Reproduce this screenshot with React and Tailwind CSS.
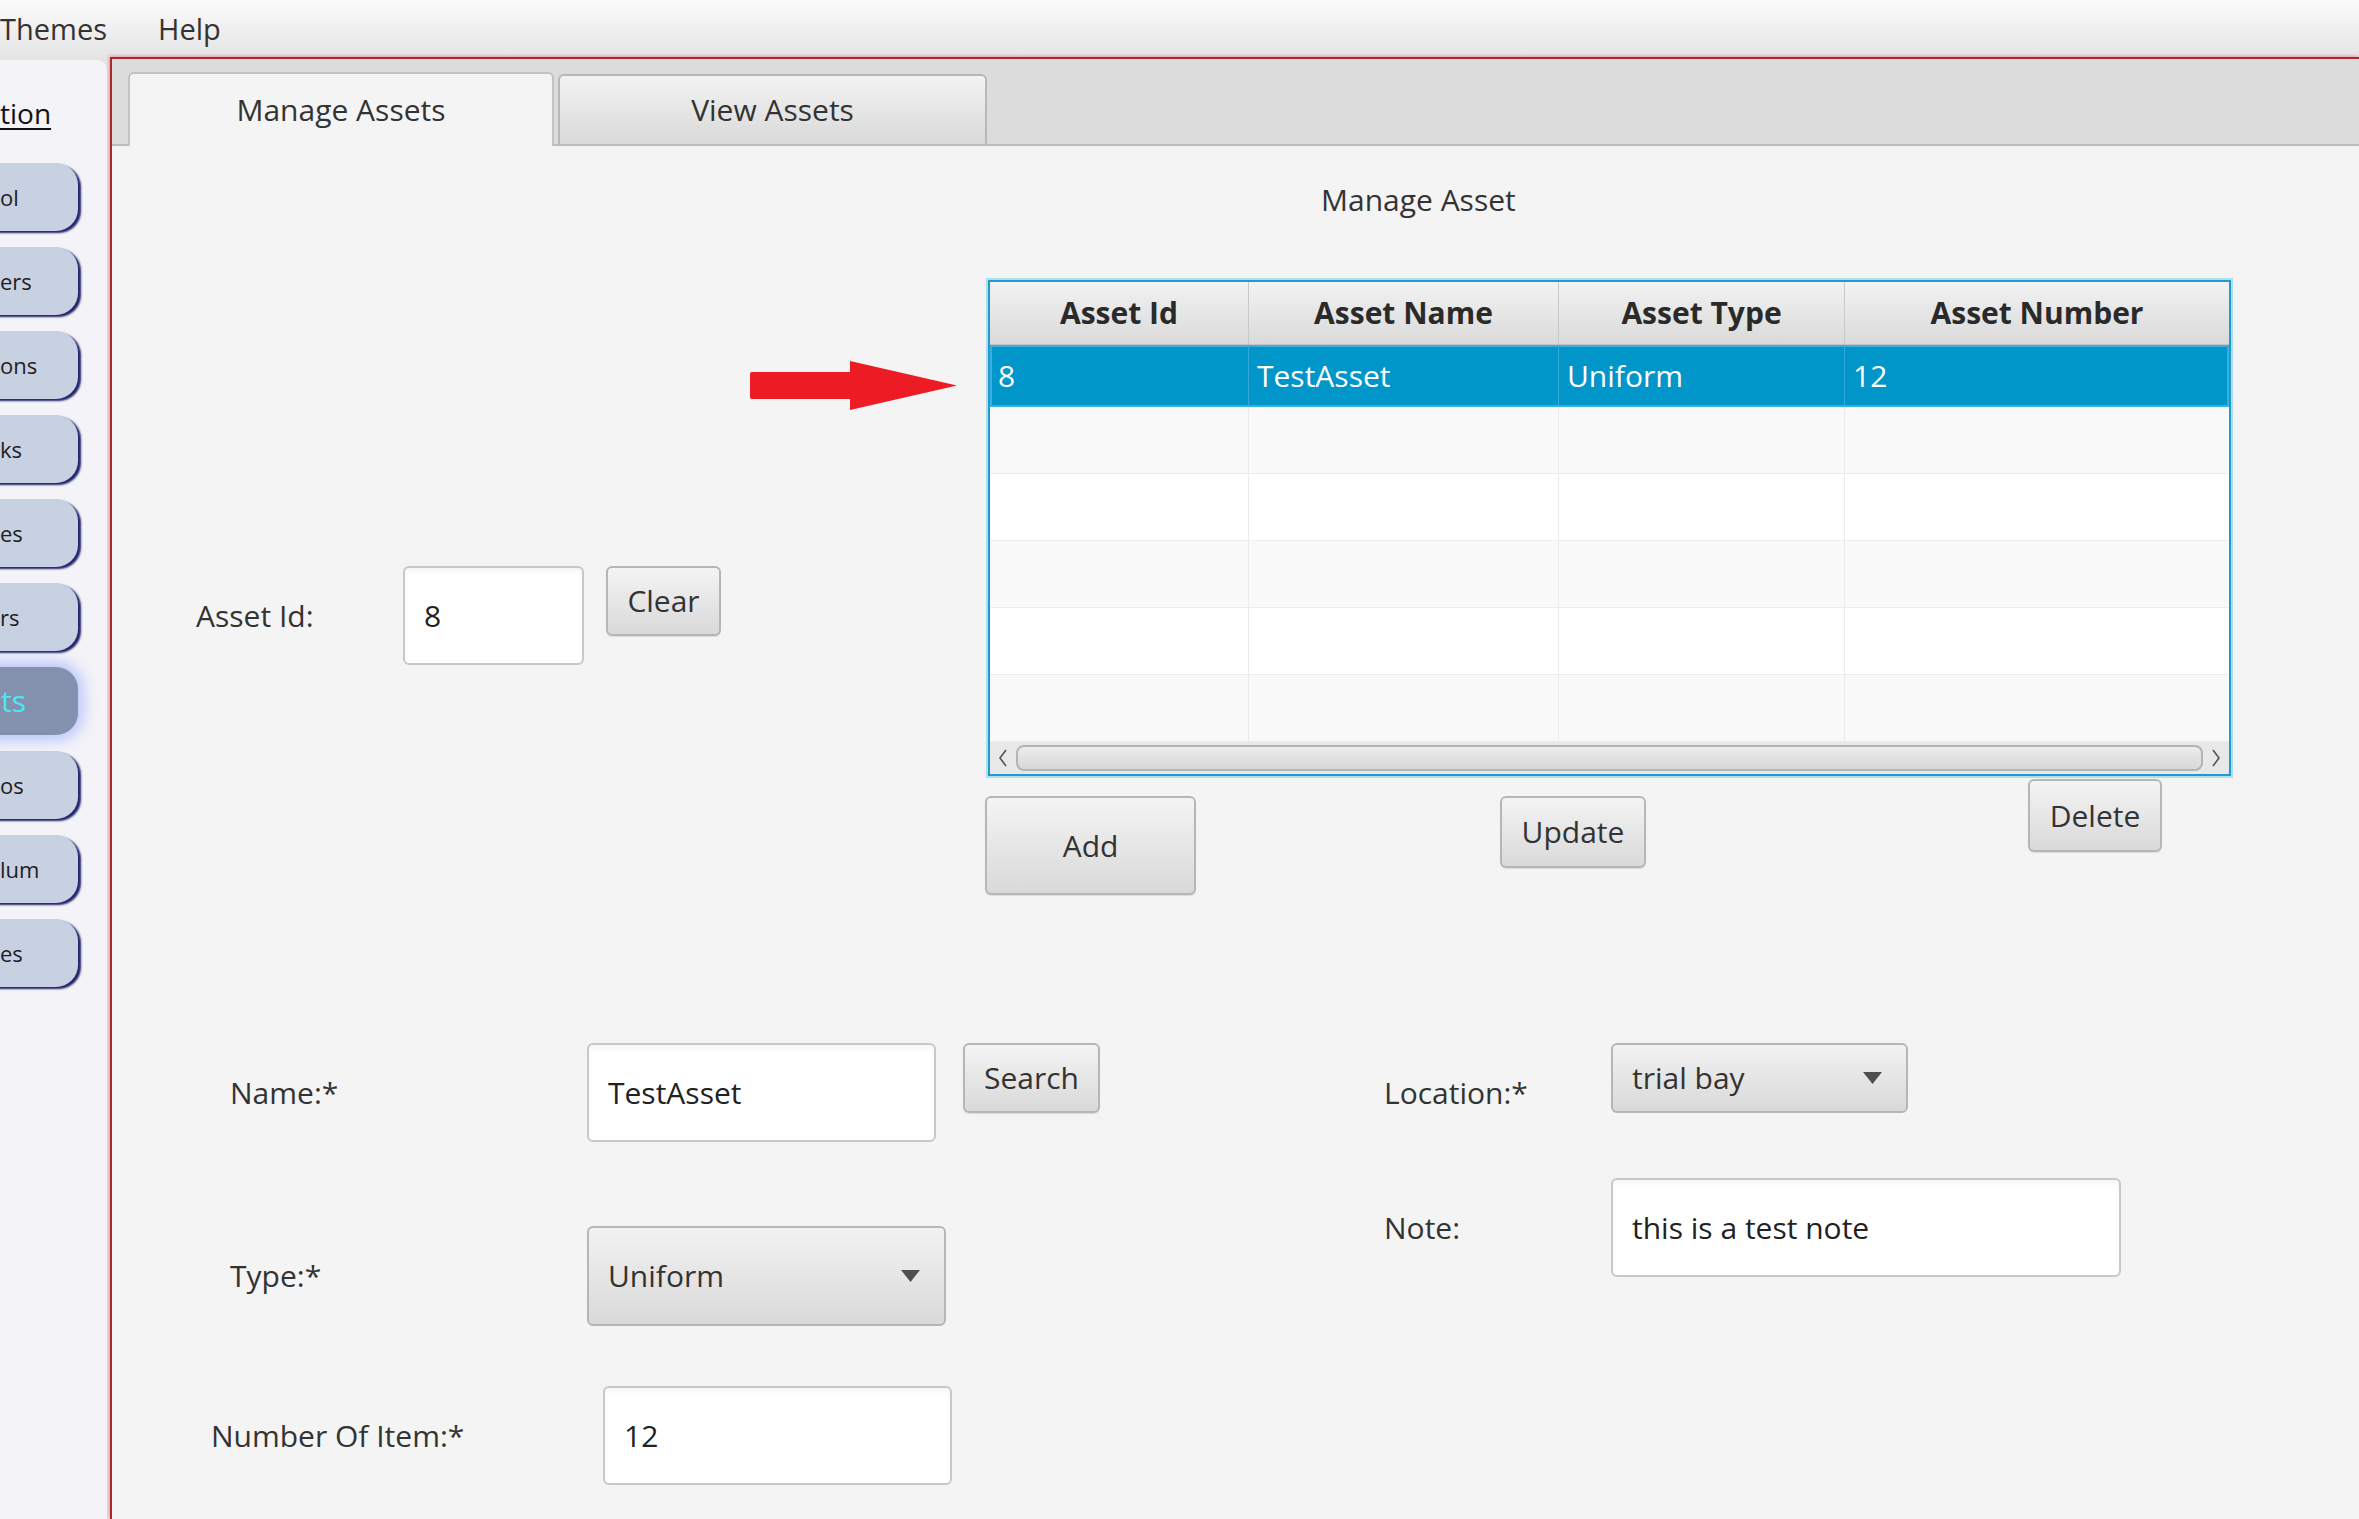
import React from "react";

const Btn = ({ children, className }) => (
  <div
    className={`flex items-center justify-center rounded-[6px] border-2 border-[#b6b6b6] bg-linear-to-b from-[#f4f4f4] to-[#d9d9d9] text-[30px] leading-none text-[#333] shadow-[0_1px_1px_rgba(0,0,0,0.10)] ${className}`}
  >
    {children}
  </div>
);

const Field = ({ children, className }) => (
  <div
    className={`flex items-center rounded-[6px] border-2 border-[#c8c8c8] bg-white pl-[19px] text-[30px] leading-none text-[#222] shadow-[inset_0_4px_4px_rgba(0,0,0,0.035)] ${className}`}
  >
    {children}
  </div>
);

const Combo = ({ children, className }) => (
  <div
    className={`flex items-center justify-between rounded-[6px] border-2 border-[#b6b6b6] bg-linear-to-b from-[#f2f2f2] to-[#d9d9d9] pl-[19px] pr-[24px] text-[30px] leading-none text-[#333] ${className}`}
  >
    <span>{children}</span>
    <svg width="19" height="12" viewBox="0 0 19 12">
      <polygon points="0,0 19,0 9.5,12" fill="#4f4f4f" />
    </svg>
  </div>
);

const cols = [259, 310, 286, 384];

const SideBtn = ({ text }) => (
  <div className="-ml-[30px] flex h-[68px] w-[108px] items-center rounded-[22px] bg-[#c7d1e2] pl-[30px] text-[22px] leading-none text-[#1e1e1e] shadow-[3px_2px_2px_#24246e]">
    {text}
  </div>
);

export default function App() {
  const sideItems = ["ol", "ers", "ons", "ks", "es", "rs", null, "os", "lum", "es"];
  return (
    <div className="flex h-[1519px] w-[2359px] flex-col overflow-hidden bg-[#e4e4e4] font-['Open_Sans',sans-serif] text-[#333]">
      {/* Menu bar */}
      <div className="flex h-[57px] shrink-0 items-center bg-linear-to-b from-[#fbfbfb] to-[#e5e5e5] text-[29px] leading-none text-[#333]">
        <span className="ml-[0px]">Themes</span>
        <span className="ml-[51px]">Help</span>
      </div>

      <div className="flex flex-1">
        {/* Sidebar */}
        <div className="mt-[3px] flex w-[107px] shrink-0 flex-col rounded-tr-[10px] bg-[#f3f3f8]">
          <div className="mt-[36px] h-[34px] text-[28px] leading-[34px] text-[#111] underline underline-offset-[4px] decoration-[2px]">
            tion
          </div>
          <div className="mt-[33px] flex flex-col gap-[16px]">
            {sideItems.map((t, i) =>
              t === null ? (
                <div
                  key={i}
                  className="-ml-[30px] flex h-[68px] w-[108px] items-center rounded-[22px] bg-[#8391ae] pl-[31px] text-[30px] leading-none text-[#4fe6f2] shadow-[0_0_14px_5px_rgba(150,170,255,0.65)]"
                >
                  ts
                </div>
              ) : (
                <SideBtn key={i} text={t} />
              )
            )}
          </div>
        </div>

        {/* Main area with red frame */}
        <div className="ml-[3px] flex flex-1 flex-col border-l-2 border-t-2 border-[#a9272d] shadow-[-1px_-1px_3px_rgba(225,90,90,0.55)]">
          {/* Tab header */}
          <div className="flex h-[87px] shrink-0 items-end gap-[4px] border-b-2 border-[#bcbcbc] bg-[#dcdcdc] pl-[16px]">
            <div className="-mb-[2px] flex h-[74px] w-[426px] items-center justify-center rounded-t-[6px] border-2 border-b-0 border-[#c2c2c2] bg-[#f4f4f4] text-[30px] leading-none text-[#333]">
              Manage Assets
            </div>
            <div className="flex h-[70px] w-[429px] items-center justify-center rounded-t-[6px] border-2 border-b-0 border-[#b8b8b8] bg-linear-to-b from-[#f3f3f3] to-[#d9d9d9] text-[30px] leading-none text-[#333]">
              View Assets
            </div>
          </div>

          {/* Content */}
          <div className="flex flex-1 flex-col bg-[#f4f4f4]">
            <div className="ml-[1209px] mt-[37px] h-[34px] text-[30px] leading-[34px] text-[#333]">
              Manage Asset
            </div>

            {/* Row B */}
            <div className="mt-[63px] flex">
              <div className="flex w-[876px] shrink-0 flex-col">
                <svg
                  className="ml-[637px] mt-[81px]"
                  width="209"
                  height="50"
                  viewBox="0 0 209 50"
                >
                  <rect x="1" y="11" width="104" height="27" rx="2" fill="#ed1c24" />
                  <polygon points="101,0 208,24.5 101,49" fill="#ed1c24" />
                </svg>
                <div className="mt-[155px] flex items-start">
                  <div className="ml-[84px] flex h-[99px] w-[207px] items-center text-[30px] leading-none text-[#333]">
                    Asset Id:
                  </div>
                  <Field className="h-[99px] w-[181px]">8</Field>
                  <Btn className="ml-[22px] h-[70px] w-[115px]">Clear</Btn>
                </div>
              </div>

              <div className="flex flex-col">
                {/* Table */}
                <div className="flex h-[496px] w-[1243px] flex-col border-2 border-[#1f9bd2] bg-white shadow-[0_0_0_2px_rgba(120,200,235,0.55)]">
                  <div className="flex h-[63px] shrink-0 border-b border-[#c4c4c4] bg-linear-to-b from-[#f2f2f2] to-[#dadada]">
                    {["Asset Id", "Asset Name", "Asset Type", "Asset Number"].map((h, i) => (
                      <div
                        key={h}
                        style={{ width: cols[i] }}
                        className="flex shrink-0 items-center justify-center border-r border-[#c8c8c8] text-[30px] font-bold leading-none text-[#2a2a2a] last:border-r-0"
                      >
                        {h}
                      </div>
                    ))}
                  </div>
                  <div className="flex h-[62px] shrink-0 bg-[#0096c9] shadow-[inset_0_0_0_2px_#3aaede]">
                    {["8", "TestAsset", "Uniform", "12"].map((c, i) => (
                      <div
                        key={i}
                        style={{ width: cols[i] }}
                        className="flex shrink-0 items-center border-r border-[#35a9d9] pl-[8px] text-[30px] leading-none text-white last:border-r-0"
                      >
                        {c}
                      </div>
                    ))}
                  </div>
                  {[0, 1, 2, 3, 4].map((r) => (
                    <div
                      key={r}
                      className={`flex h-[67px] shrink-0 border-b border-[#ededed] ${r % 2 === 0 ? "bg-[#f9f9f9]" : "bg-white"}`}
                    >
                      {cols.map((w, i) => (
                        <div
                          key={i}
                          style={{ width: w }}
                          className="shrink-0 border-r border-[#ebebeb] last:border-r-0"
                        />
                      ))}
                    </div>
                  ))}
                  {/* Scrollbar */}
                  <div className="flex h-[32px] shrink-0 items-center bg-[#e8e8e8] px-[6px]">
                    <svg width="14" height="20" viewBox="0 0 14 20">
                      <polyline points="10,2 4,10 10,18" fill="none" stroke="#555" strokeWidth="1.6" />
                    </svg>
                    <div className="mx-[6px] h-[26px] flex-1 rounded-[8px] border-2 border-[#b4b4b4] bg-linear-to-b from-[#ececec] to-[#d8d8d8]" />
                    <svg width="14" height="20" viewBox="0 0 14 20">
                      <polyline points="4,2 10,10 4,18" fill="none" stroke="#555" strokeWidth="1.6" />
                    </svg>
                  </div>
                </div>

                {/* Buttons */}
                <div className="flex items-start">
                  <Btn className="-ml-[3px] mt-[20px] h-[99px] w-[211px]">Add</Btn>
                  <Btn className="ml-[304px] mt-[20px] h-[72px] w-[146px]">Update</Btn>
                  <Btn className="ml-[382px] mt-[3px] h-[73px] w-[134px]">Delete</Btn>
                </div>
              </div>
            </div>

            {/* Row C */}
            <div className="mt-[148px] flex">
              <div className="flex w-[988px] shrink-0 flex-col">
                <div className="flex items-start">
                  <div className="ml-[118px] flex h-[99px] w-[357px] items-center text-[30px] leading-none">
                    Name:*
                  </div>
                  <Field className="h-[99px] w-[349px]">TestAsset</Field>
                  <Btn className="ml-[27px] h-[70px] w-[137px]">Search</Btn>
                </div>
                <div className="mt-[84px] flex items-start">
                  <div className="ml-[118px] flex h-[100px] w-[357px] items-center text-[30px] leading-none">
                    Type:*
                  </div>
                  <Combo className="h-[100px] w-[359px]">Uniform</Combo>
                </div>
                <div className="mt-[60px] flex items-start">
                  <div className="ml-[99px] flex h-[99px] w-[392px] items-center text-[30px] leading-none">
                    Number Of Item:*
                  </div>
                  <Field className="h-[99px] w-[349px]">12</Field>
                </div>
              </div>

              <div className="ml-[284px] flex flex-col">
                <div className="flex items-start">
                  <div className="flex h-[99px] w-[227px] items-center text-[30px] leading-none">
                    Location:*
                  </div>
                  <Combo className="h-[70px] w-[297px]">trial bay</Combo>
                </div>
                <div className="mt-[36px] flex items-start">
                  <div className="flex h-[99px] w-[227px] items-center text-[30px] leading-none">
                    Note:
                  </div>
                  <Field className="h-[99px] w-[510px]">this is a test note</Field>
                </div>
              </div>
            </div>
          </div>
        </div>
      </div>
    </div>
  );
}
